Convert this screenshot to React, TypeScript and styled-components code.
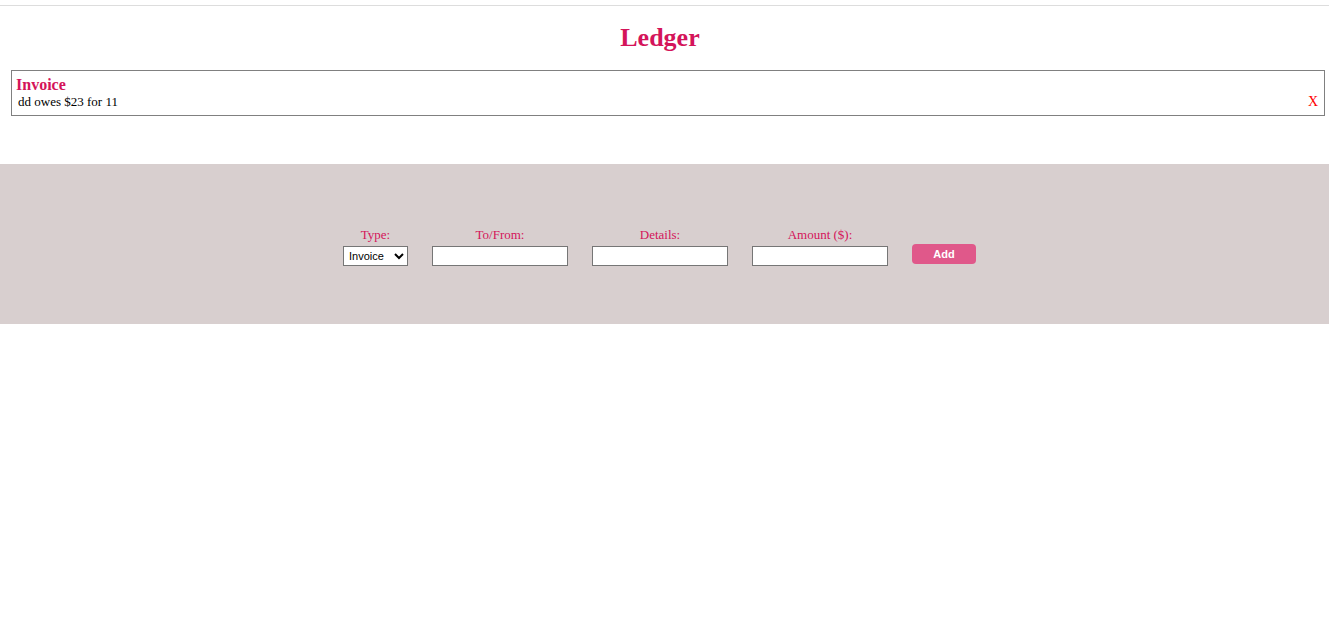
import React from "react";
import styled, { createGlobalStyle } from "styled-components";

const Global = createGlobalStyle`
  html, body { margin: 0; padding: 0; background: #fff; }
  body { font-family: "Liberation Serif", "Times New Roman", serif; }
`;

const TopRule = styled.div`
  margin-top: 5px;
  height: 1px;
  background: #dddddd;
`;

const Title = styled.h1`
  margin: 17px 0 0;
  padding-right: 9px;
  height: 47px;
  line-height: 30px;
  text-align: center;
  font-size: 26px;
  font-weight: bold;
  color: #d4145a;
`;

const List = styled.ul`
  list-style: none;
  margin: 0 4px 0 11px;
  padding: 0;
`;

const Item = styled.li`
  border: 1px solid #808080;
  height: 44px;
  box-sizing: content-box;
  padding: 0 4px 0 4px;
  display: flex;
  align-items: flex-end;
  justify-content: space-between;
`;

const ItemBody = styled.div`
  display: flex;
  flex-direction: column;
  padding-bottom: 6px;
`;

const ItemTitle = styled.h4`
  margin: 0;
  font-size: 16px;
  line-height: 18px;
  font-weight: bold;
  color: #d4145a;
`;

const ItemText = styled.p`
  margin: 0 0 0 2px;
  font-size: 13px;
  line-height: 15px;
  color: #000;
`;

const Delete = styled.button`
  border: none;
  background: transparent;
  padding: 0 2px 5px 0;
  font-family: "Liberation Serif", serif;
  font-size: 14px;
  line-height: 16px;
  color: #ff0000;
  cursor: pointer;
`;

const FormBand = styled.form`
  margin-top: 48px;
  height: 160px;
  background: #d8cfcf;
  display: flex;
  justify-content: center;
  align-items: flex-start;
  gap: 24px;
  padding: 63px 10px 0 0;
  box-sizing: border-box;
`;

const Field = styled.div`
  display: flex;
  flex-direction: column;
  align-items: center;
`;

const Label = styled.label`
  font-size: 13px;
  line-height: 15px;
  color: #d4145a;
  margin-bottom: 4px;
`;

const Select = styled.select`
  width: 65px;
  height: 20px;
  box-sizing: border-box;
  border: 1px solid #767676;
  border-radius: 0;
  background: #fff;
  font-family: "Liberation Sans", Arial, sans-serif;
  font-size: 11px;
  padding: 0 0 0 1px;
  color: #000;
`;

const Input = styled.input`
  width: 136px;
  height: 20px;
  box-sizing: border-box;
  border: 1px solid #767676;
  border-radius: 0;
  background: #fff;
  padding: 1px 2px;
`;

const AddButton = styled.button`
  margin-top: 17px;
  width: 64px;
  height: 20px;
  border: none;
  border-radius: 4px;
  background: #e0588a;
  color: #fff;
  font-family: "Liberation Sans", Arial, sans-serif;
  font-weight: bold;
  font-size: 11px;
  padding: 0;
  cursor: pointer;
`;

export default function App() {
  return (
    <>
      <Global />
      <TopRule />
      <Title>Ledger</Title>
      <List>
        <Item>
          <ItemBody>
            <ItemTitle>Invoice</ItemTitle>
            <ItemText>dd owes $23 for 11</ItemText>
          </ItemBody>
          <Delete type="button">X</Delete>
        </Item>
      </List>
      <FormBand onSubmit={(e) => e.preventDefault()}>
        <Field>
          <Label>Type:</Label>
          <Select defaultValue="invoice">
            <option value="invoice">Invoice</option>
            <option value="payment">Payment</option>
          </Select>
        </Field>
        <Field>
          <Label>To/From:</Label>
          <Input type="text" />
        </Field>
        <Field>
          <Label>Details:</Label>
          <Input type="text" />
        </Field>
        <Field>
          <Label>Amount ($):</Label>
          <Input type="number" />
        </Field>
        <AddButton type="submit">Add</AddButton>
      </FormBand>
    </>
  );
}
